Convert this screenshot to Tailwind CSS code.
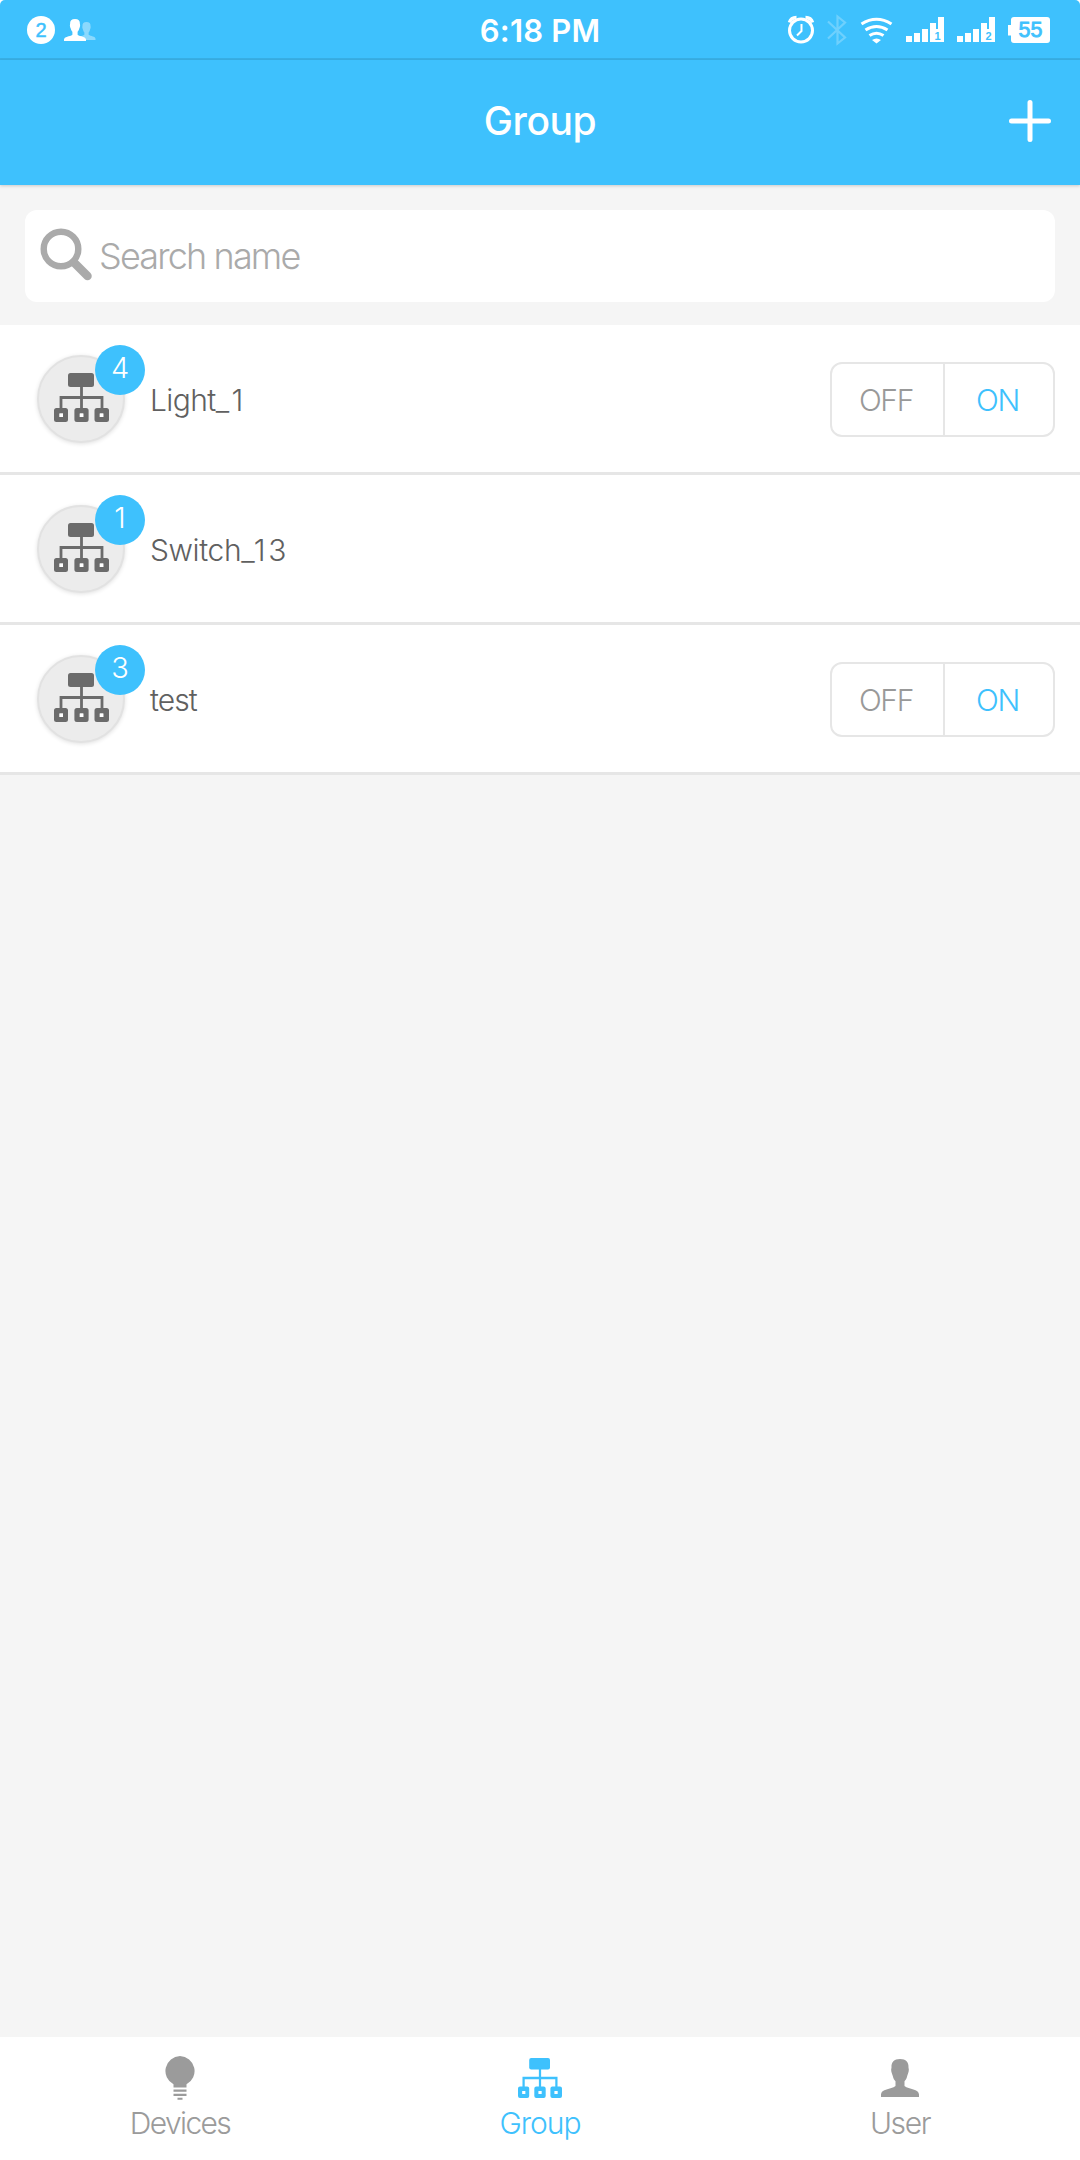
<!DOCTYPE html>
<html lang="en">
<head>
<meta charset="utf-8">
<title>Group</title>
<script src="https://cdn.jsdelivr.net/npm/@tailwindcss/browser@4"></script>
</head>
<body class="bg-white">
<svg class="hidden">
  <symbol id="tree" viewBox="0 0 55 49">
    <rect x="14" y="0" width="26" height="14" rx="2.5"/>
    <path d="M27.500 13V36M7 36V24.500H48V36" fill="none" stroke="currentColor" stroke-width="2.800"/>
    <path fill-rule="evenodd" d="M2.500 35h9a2.500 2.500 0 0 1 2.500 2.500v9a2.500 2.500 0 0 1-2.500 2.500h-9a2.500 2.500 0 0 1-2.500-2.500v-9a2.500 2.500 0 0 1 2.500-2.500zM5.500 40.500v3.500h3.500v-3.500zM22.900 35h9.200a2.500 2.500 0 0 1 2.500 2.500v9a2.500 2.500 0 0 1-2.500 2.500h-9.200a2.500 2.500 0 0 1-2.500-2.500v-9a2.500 2.500 0 0 1 2.500-2.500zM25.800 40.500v3.500h3.500v-3.500zM43 35h9.500a2.500 2.500 0 0 1 2.500 2.500v9a2.500 2.500 0 0 1-2.500 2.500h-9.500a2.500 2.500 0 0 1-2.500-2.500v-9a2.500 2.500 0 0 1 2.500-2.500zM45.800 40.500v3.500h3.500v-3.500z"/>
    <path d="M5.500 40.500h3.500v3.500h-3.500zM25.800 40.500h3.500v3.500h-3.500zM45.800 40.500h3.500v3.500h-3.500z" fill="#fff"/>
  </symbol>
  <symbol id="person" viewBox="0 0 38 38">
    <path d="M19 0c6 0 8.800 3.200 8.500 8.500 1 3-.3 5.500-1.300 8.500-.5 2.500-1.600 4.200-2.700 5.200V27c4.500 3.500 14.500 3 14.500 8.500V38H0v-2.500C0 30 10 30.500 14.500 27v-4.800c-1.100-1-2.200-2.700-2.700-5.200-1-3-2.300-5.500-1.300-8.500C10.200 3.200 13 0 19 0z"/>
  </symbol>
</svg>
<div class="flex h-[2160px] w-[1080px] flex-col overflow-hidden rounded-t-[5px] bg-[#f5f5f5] font-['Inter',sans-serif] font-light">
  <div class="grid h-[60px] shrink-0 grid-cols-3 border-b-2 border-[#38b0e6] bg-[#3ec1fd] text-white">
    <div class="flex items-center pt-[2px] pl-[27px]">
      <span class="flex size-7 items-center justify-center rounded-full bg-white font-['Liberation_Sans',sans-serif] text-[20px] leading-none font-normal text-[#3ec1fd] [-webkit-text-stroke:0.5px_#3ec1fd]">2</span>
      <svg class="ml-[9px] h-[22px] w-8" viewBox="0 0 32 22" fill="#fff">
        <use href="#person" x="13" y="3" width="19" height="18" opacity=".4"/>
        <use href="#person" x="0" y="0" width="22" height="22"/>
      </svg>
    </div>
    <div class="flex items-center justify-center pt-[3px] text-[31px] leading-none font-semibold tracking-[0.2px]">6:18 PM</div>
    <svg class="ml-[50px] h-[58px] w-[310px]" viewBox="0 0 310 58">
      <g fill="none" stroke="#fff">
        <circle cx="31" cy="30.500" r="11.500" stroke-width="3"/>
        <path d="M31.500 24v7l-4.500 4.500" stroke-width="2"/>
        <path d="M19.500 22.500q1.500-5 7-5M42.500 22.500q-1.500-5-7-5" stroke-width="3.500"/>
        <path d="M58 21.500L75 37.500l-7.500 6V16.500l7.500 6L58 38.500" stroke-width="2.200" opacity=".25"/>
        <path d="M91.500 24q15-9.500 30 0M95.500 30q11-7 22 0M99.500 35.500q7-4.500 14 0" stroke-width="3.200"/>
      </g>
      <g fill="#fff">
        <path d="M102 40q4.500-3 9 0l-4.500 3.500z"/>
        <path id="bars" d="M136 36h6v6h-6zM144 33h6v9h-6zM152 29h6v13h-6zM160 23h6v7h-6zM168 17h6v25h-14V29h8z"/>
        <use href="#bars" x="51"/>
        <path d="M244 17h33q3 0 3 3v20q0 3-3 3h-33q-3 0-3-3v-4.500h-3v-10.500h3V20q0-3 3-3z"/>
      </g>
      <g fill="#3ec1fd" text-anchor="middle" class="font-['Liberation_Sans',sans-serif] font-bold">
        <text x="167.500" y="39.500" font-size="11">1</text>
        <text x="218.500" y="39.500" font-size="11">2</text>
        <text x="260.500" y="37" font-size="21.500" stroke="#3ec1fd" stroke-width=".8" class="font-normal">55</text>
      </g>
    </svg>
  </div>
  <header class="z-10 grid h-[125px] shrink-0 grid-cols-3 items-center bg-[#3ec1fd] pb-1 text-white shadow-[0_1px_3px_rgba(0,0,0,0.18)]">
    <h1 class="col-start-2 text-center text-[39px] leading-none font-medium tracking-[-0.4px]">Group</h1>
    <svg class="mr-[29px] size-[42px] justify-self-end" viewBox="0 0 42 42" stroke="#fff" stroke-width="5" stroke-linecap="round"><path d="M21 2.500v37M2.500 21h37"/></svg>
  </header>
  <div class="flex h-[140px] shrink-0 items-center px-[25px] pt-[25px] pb-[23px]">
    <div class="flex h-[92px] flex-1 items-center rounded-xl bg-white pl-[15px]">
      <svg class="-mt-1 size-[53px]" viewBox="0 0 53 53" fill="none" stroke="#aaa"><circle cx="21" cy="21" r="17.300" stroke-width="6.400"/><path d="M34 34.500L47.500 48" stroke-width="8.500" stroke-linecap="round"/></svg>
      <span class="ml-[6px] text-[36px] leading-none tracking-[-1.85px] text-[#aaa]">Search name</span>
    </div>
  </div>
  <ul class="text-[#606060]">
    <li class="flex h-[150px] items-center border-b-[3px] border-[#e6e6e6] bg-white pr-[25px] pl-[37px]">
      <div class="relative flex size-[88px] items-center justify-center rounded-full border-2 border-[#e2e2e2] bg-[#ececec] text-[#6b6b6b] shadow-[0_1px_4px_rgba(0,0,0,0.12)]">
        <svg class="-mt-[2px] h-[49px] w-[55px]" fill="currentColor"><use href="#tree"/></svg>
        <span class="absolute -top-3 left-14 flex size-[50px] items-center justify-center rounded-full bg-[#3ec1fd] pb-1 text-[29px] leading-none text-white">4</span>
      </div>
      <span class="ml-[25px] flex-1 pt-[2px] text-[30px] leading-none tracking-[-0.6px]">Light<span class="tracking-[2.500px]">_</span>1</span>
      <div class="mt-[2px] flex h-[75px] w-[225px] rounded-xl border-2 border-[#e6e6e6] text-[30px] leading-none tracking-[-1.3px]">
        <button class="w-[113px] border-r-2 border-[#e6e6e6] pr-[3px] text-[#999]">OFF</button><button class="flex-1 pr-[3px] text-[#3ec1fd]">ON</button>
      </div>
    </li>
    <li class="flex h-[150px] items-center border-b-[3px] border-[#e6e6e6] bg-white pr-[25px] pl-[37px]">
      <div class="relative flex size-[88px] items-center justify-center rounded-full border-2 border-[#e2e2e2] bg-[#ececec] text-[#6b6b6b] shadow-[0_1px_4px_rgba(0,0,0,0.12)]">
        <svg class="-mt-[2px] h-[49px] w-[55px]" fill="currentColor"><use href="#tree"/></svg>
        <span class="absolute -top-3 left-14 flex size-[50px] items-center justify-center rounded-full bg-[#3ec1fd] pb-1 text-[29px] leading-none text-white">1</span>
      </div>
      <span class="ml-[25px] flex-1 pt-[2px] text-[30px] leading-none tracking-[-0.4px]">Switch<span class="tracking-[2.500px]">_1</span>3</span>
    </li>
    <li class="flex h-[150px] items-center border-b-[3px] border-[#e6e6e6] bg-white pr-[25px] pl-[37px]">
      <div class="relative flex size-[88px] items-center justify-center rounded-full border-2 border-[#e2e2e2] bg-[#ececec] text-[#6b6b6b] shadow-[0_1px_4px_rgba(0,0,0,0.12)]">
        <svg class="-mt-[2px] h-[49px] w-[55px]" fill="currentColor"><use href="#tree"/></svg>
        <span class="absolute -top-3 left-14 flex size-[50px] items-center justify-center rounded-full bg-[#3ec1fd] pb-1 text-[29px] leading-none text-white">3</span>
      </div>
      <span class="ml-[25px] flex-1 pt-[2px] text-[30px] leading-none tracking-[-0.9px]">test</span>
      <div class="mt-[2px] flex h-[75px] w-[225px] rounded-xl border-2 border-[#e6e6e6] text-[30px] leading-none tracking-[-1.3px]">
        <button class="w-[113px] border-r-2 border-[#e6e6e6] pr-[3px] text-[#999]">OFF</button><button class="flex-1 pr-[3px] text-[#3ec1fd]">ON</button>
      </div>
    </li>
  </ul>
  <nav class="mt-auto grid h-[123px] shrink-0 grid-cols-3 bg-white text-[30px] leading-none text-[#9b9b9b]">
    <div class="flex flex-col items-center pt-[19px]">
      <svg class="h-11 w-[30px]" viewBox="0 0 30 44" fill="currentColor"><path d="M15 0a15 15 0 0 1 6.500 28.300V31.500h-13V28.300A15 15 0 0 1 15 0zM8.500 33.500h13v2.300h-13zM8.500 37.700h13v2.300h-13zM12.500 41.800h5v2h-5z"/></svg>
      <span class="mt-2 tracking-[-1.6px]">Devices</span>
    </div>
    <div class="flex flex-col items-center pt-[21px] text-[#3ec1fd]">
      <svg class="h-10 w-11" viewBox="0 0 55 49" preserveAspectRatio="none" fill="currentColor"><use href="#tree" width="55" height="49"/></svg>
      <span class="mt-[10px] tracking-[-1px]">Group</span>
    </div>
    <div class="flex flex-col items-center pt-[22px]">
      <svg class="size-[38px]" fill="currentColor"><use href="#person"/></svg>
      <span class="mt-[11px] tracking-[-1.4px]">User</span>
    </div>
  </nav>
</div>
</body>
</html>
